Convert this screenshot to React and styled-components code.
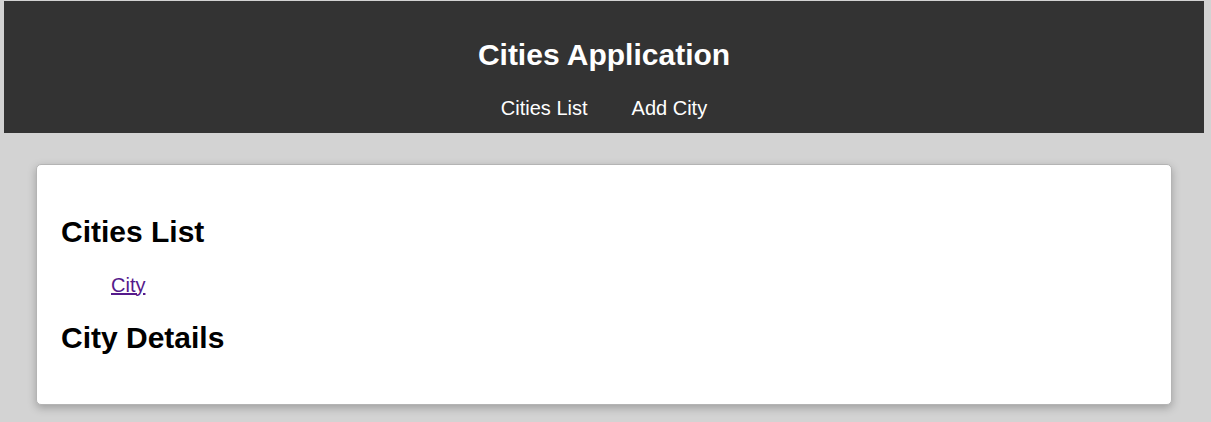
import React from "react";
import styled, { createGlobalStyle } from "styled-components";

const GlobalStyle = createGlobalStyle`
  html, body {
    margin: 0;
    padding: 0;
    background: #d3d3d3;
    font-family: "Liberation Sans", Arial, sans-serif;
  }
`;

const Page = styled.div`
  padding: 1px 7px 0 4px;
  width: 1200px;
`;

const Header = styled.header`
  background: #333333;
  color: #ffffff;
  padding: 12px 0 13px;
  text-align: center;
`;

const Title = styled.h1`
  font-size: 30px;
  font-weight: bold;
  margin: 24.9px 0;
`;

const Nav = styled.nav`
  display: flex;
  justify-content: center;
  gap: 44px;
`;

const NavLink = styled.a`
  color: #ffffff;
  text-decoration: none;
  font-size: 20px;
`;

const Main = styled.main`
  padding: 31px 32px 32px;
`;

const Card = styled.section`
  background: #ffffff;
  border: 1px solid #b4b4b4;
  border-radius: 5px;
  box-shadow: 0 3px 9px rgba(0, 0, 0, 0.25);
  padding: 25px 24px 24px;
`;

const Heading = styled.h2`
  font-size: 30px;
  font-weight: bold;
  margin: 24.9px 0;
  color: #000;
`;

const List = styled.ul`
  list-style: none;
  margin: 20px 0;
  padding-left: 50px;
  font-size: 20px;
`;

const CityLink = styled.a`
  color: #551a8b;
  text-decoration: underline;
`;

export default function App() {
  return (
    <>
      <GlobalStyle />
      <Page>
        <Header>
          <Title>Cities Application</Title>
          <Nav>
            <NavLink href="#list">Cities List</NavLink>
            <NavLink href="#add">Add City</NavLink>
          </Nav>
        </Header>
        <Main>
          <Card>
            <Heading>Cities List</Heading>
            <List>
              <li>
                <CityLink href="#city">City</CityLink>
              </li>
            </List>
            <Heading>City Details</Heading>
          </Card>
        </Main>
      </Page>
    </>
  );
}
